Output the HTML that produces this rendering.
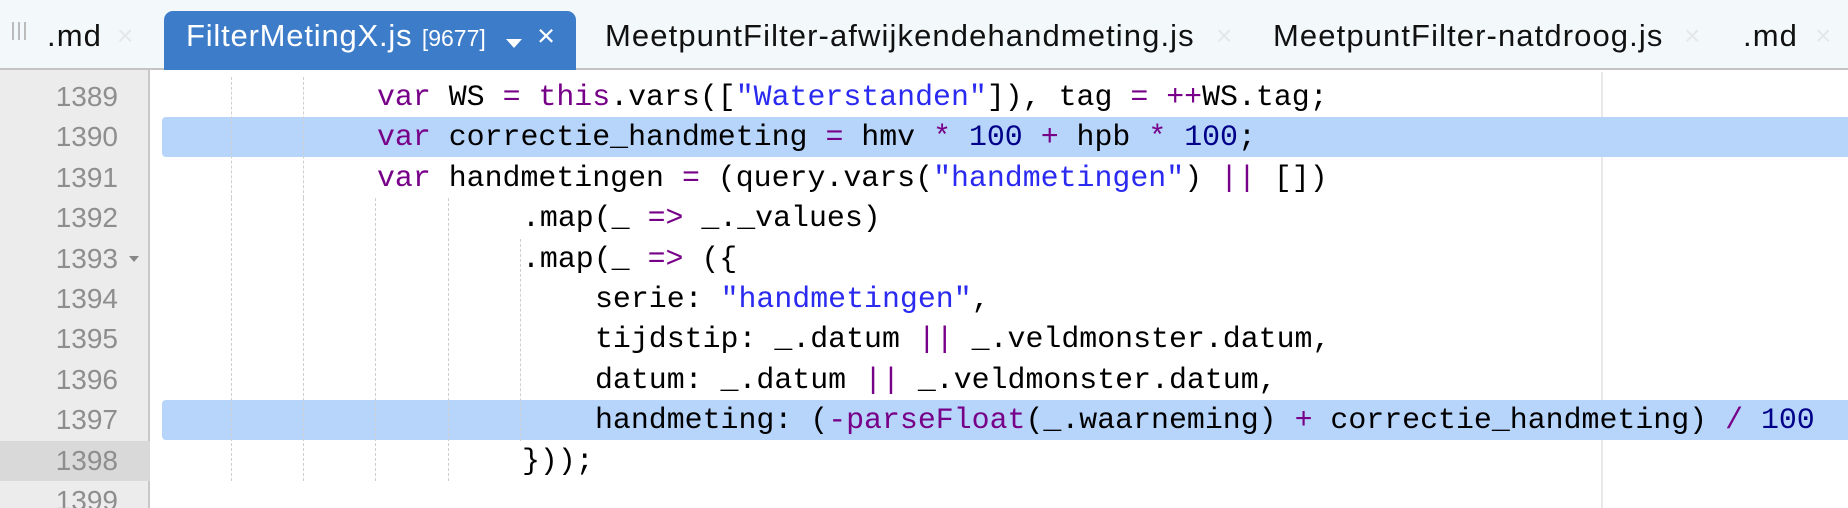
<!DOCTYPE html>
<html><head><meta charset="utf-8"><style>
*{margin:0;padding:0;box-sizing:border-box}
body{width:1848px;height:508px;overflow:hidden;background:#fff;position:relative;font-family:"Liberation Sans",sans-serif}
#tabs{position:absolute;left:0;top:0;width:1848px;height:70px;background:#f3f9fb;border-bottom:2px solid #c4c4c4}
.t{position:absolute;top:18px;font-size:31px;letter-spacing:1.1px;color:#111;white-space:nowrap}
.x{position:absolute;top:20px;font-size:28px;color:#e4e8ea}
#act{position:absolute;left:164px;top:11px;width:412px;height:59px;background:#3d7cc9;border-radius:9px 9px 0 0;color:#fff}
#gut{position:absolute;left:0;top:70px;width:150px;height:438px;background:#ececec;border-right:2px solid #c8c8c8}
.ln{position:absolute;left:0;width:118px;text-align:right;font-size:28px;color:#8e8e8e;height:40px;line-height:40px}
.hl{position:absolute;left:162px;right:0;height:40px;background:#b7d5fb;border-radius:4px 0 0 4px}
.code{position:absolute;font-family:"Liberation Mono",monospace;font-size:29.9px;line-height:40px;height:40px;white-space:pre;color:#000}
.g{position:absolute;width:0;border-left:1px dashed #cfcfcf;height:40px}
.k{color:#770088}.s{color:#2a2af0}.n{color:#000088}
#margin{position:absolute;left:1601px;top:72px;width:2px;height:436px;background:#e8e8e8}
</style></head><body>
<div id="tabs">
<div style="position:absolute;left:12px;top:22px;width:14px;height:18px;border-left:2px solid #bbb;border-right:2px solid #bbb"><div style="margin-left:4px;width:2px;height:18px;background:#bbb"></div></div>
<div class="t" style="left:47px">.md</div><div class="x" style="left:117px">×</div>
<div id="act"><div class="t" style="left:22px;top:7px;color:#fff;letter-spacing:0.8px">FilterMetingX.js <span style="font-size:23px;letter-spacing:0">[9677]</span></div>
<div style="position:absolute;left:342px;top:28px;width:0;height:0;border-left:8px solid transparent;border-right:8px solid transparent;border-top:9px solid #fff"></div>
<div class="t" style="left:373px;top:7px;color:#fff">×</div></div>
<div class="t" style="left:605px">MeetpuntFilter-afwijkendehandmeting.js</div><div class="x" style="left:1216px">×</div>
<div class="t" style="left:1273px">MeetpuntFilter-natdroog.js</div><div class="x" style="left:1684px">×</div>
<div class="t" style="left:1743px">.md</div><div class="x" style="left:1815px">×</div>
</div>
<div id="gut"></div>
<div style="position:absolute;left:0;top:441px;width:150px;height:40px;background:#d9d9d9"></div>
<div style="position:absolute;left:0;top:72px;width:150px;height:436px;overflow:hidden">
<div class="ln" style="top:-30px">1388</div>
<div class="ln" style="top:5px">1389</div>
<div class="ln" style="top:45px">1390</div>
<div class="ln" style="top:86px">1391</div>
<div class="ln" style="top:126px">1392</div>
<div class="ln" style="top:167px">1393</div>
<div class="ln" style="top:207px">1394</div>
<div class="ln" style="top:247px">1395</div>
<div class="ln" style="top:288px">1396</div>
<div class="ln" style="top:328px">1397</div>
<div class="ln" style="top:369px">1398</div>
<div class="ln" style="top:409px">1399</div>
<div style="position:absolute;left:129px;top:184px;border-left:5px solid transparent;border-right:5px solid transparent;border-top:6px solid #888"></div>
</div>
<div id="margin"></div>
<div class="hl" style="top:117px"></div>
<div class="hl" style="top:400px"></div>
<div class="g" style="left:231px;top:77px;height:121px"></div>
<div class="g" style="left:303px;top:77px;height:121px"></div>
<div class="g" style="left:231px;top:198px;height:283px"></div>
<div class="g" style="left:303px;top:198px;height:283px"></div>
<div class="g" style="left:375px;top:198px;height:283px"></div>
<div class="g" style="left:448px;top:198px;height:283px"></div>
<div class="g" style="left:520px;top:239px;height:202px"></div>
<div class="code" style="left:377px;top:77px"><span class="k">var</span> WS <span class="k">=</span> <span class="k">this</span>.vars([<span class="s">"Waterstanden"</span>]), tag <span class="k">=</span> <span class="k">++</span>WS.tag;</div>
<div class="code" style="left:377px;top:117px"><span class="k">var</span> correctie_handmeting <span class="k">=</span> hmv <span class="k">*</span> <span class="n">100</span> <span class="k">+</span> hpb <span class="k">*</span> <span class="n">100</span>;</div>
<div class="code" style="left:377px;top:158px"><span class="k">var</span> handmetingen <span class="k">=</span> (query.vars(<span class="s">"handmetingen"</span>) <span class="k">||</span> [])</div>
<div class="code" style="left:522px;top:198px">.map(_ <span class="k">=&gt;</span> _._values)</div>
<div class="code" style="left:522px;top:239px">.map(_ <span class="k">=&gt;</span> ({</div>
<div class="code" style="left:595px;top:279px">serie: <span class="s">"handmetingen"</span>,</div>
<div class="code" style="left:595px;top:319px">tijdstip: _.datum <span class="k">||</span> _.veldmonster.datum,</div>
<div class="code" style="left:595px;top:360px">datum: _.datum <span class="k">||</span> _.veldmonster.datum,</div>
<div class="code" style="left:595px;top:400px">handmeting: (<span class="k">-parseFloat</span>(_.waarneming) <span class="k">+</span> correctie_handmeting) <span class="k">/</span> <span class="n">100</span></div>
<div class="code" style="left:522px;top:441px">}));</div>
</body></html>
